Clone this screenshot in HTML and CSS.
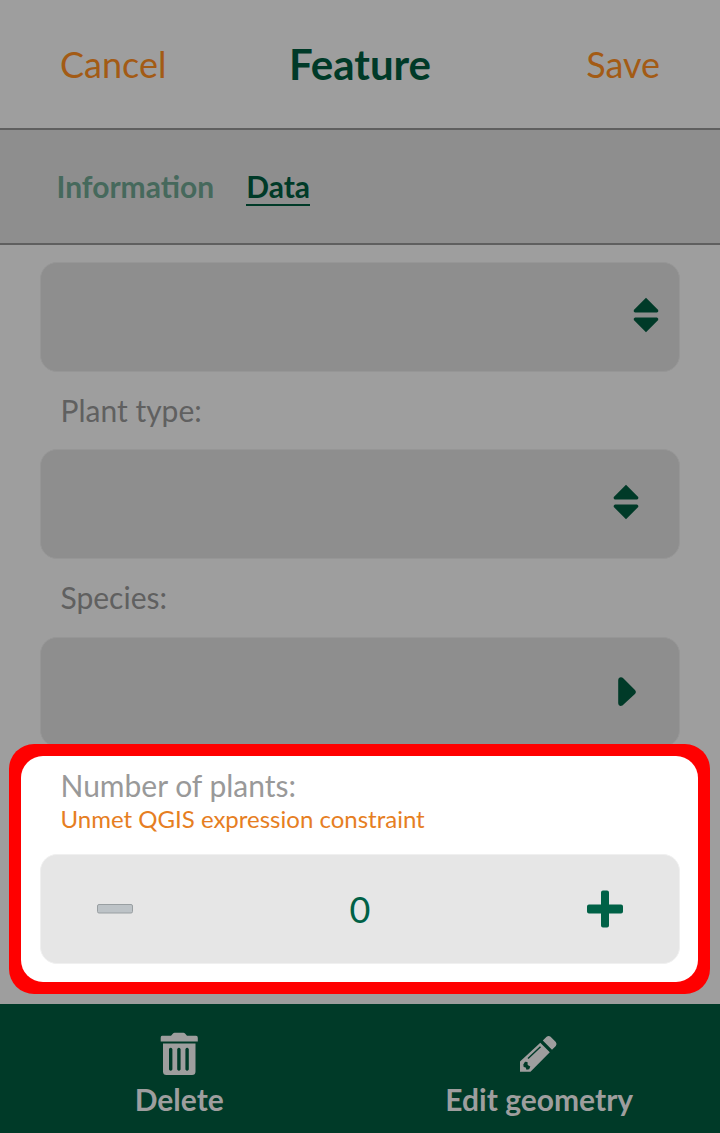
FILE: index.html
```html
<!DOCTYPE html>
<html lang="en">
<head>
<meta charset="utf-8">
<title>Feature</title>
<link rel="stylesheet" href="styles.css">
</head>
<body>
<div class="screen">
  <header class="header">
    <span class="action">Cancel</span>
    <h1 class="title">Feature</h1>
    <span class="action action-save">Save</span>
  </header>
  <nav class="tabs">
    <span class="tab">Information</span>
    <span class="tab tab-active">Data</span>
  </nav>
  <main class="form">
    <div class="field field-first">
      <svg class="icon-sort" viewBox="0 0 26 36"><path d="M13 .7 25.2 13q.6 2-1.2 2.6H2Q.2 15 .8 13ZM13 35.3.8 23Q.2 21 2 20.4h22q1.800.6 1.200 2.600Z"/></svg>
    </div>
    <div class="label">Plant type:</div>
    <div class="field field-inset">
      <svg class="icon-sort" viewBox="0 0 26 36"><path d="M13 .7 25.2 13q.6 2-1.2 2.6H2Q.2 15 .8 13ZM13 35.3.8 23Q.2 21 2 20.4h22q1.800.6 1.200 2.600Z"/></svg>
    </div>
    <div class="label">Species:</div>
    <div class="field field-next">
      <svg class="icon-next" viewBox="0 0 20 32"><path d="M1.200 4.500C1.200 1 4.500.2 6.500 2.500L18.200 14.200Q19.700 16 18.200 17.800L6.500 28.500C4.500 31 1.200 30 1.200 27Z"/></svg>
    </div>
  </main>
  <section class="highlight">
    <div class="panel">
      <div class="label-lit">Number of plants:</div>
      <div class="warning">Unmet QGIS expression constraint</div>
      <div class="stepper">
        <svg class="icon-step" viewBox="0 0 38 38"><rect class="minus" x="1.500" y="14.500" width="35" height="8.500" rx="1.500"/></svg>
        <span class="value">0</span>
        <svg class="icon-step" viewBox="0 0 38 38"><path class="plus" d="M17 .5h4q2 0 2 2V14.500h12q2 0 2 2v5q0 2-2 2H23v12q0 2-2 2h-4q-2 0-2-2v-12H3q-2 0-2-2v-5q0-2 2-2h12v-12q0-2 2-2Z"/></svg>
      </div>
    </div>
  </section>
  <footer class="toolbar">
    <div class="tool">
      <svg class="icon-tool" viewBox="0 0 44 44"><path fill-rule="evenodd" d="M5 3.700h9l2-2.200q.5-.7 1.500-.7h9q1 0 1.500.7l2 2.200h9q1.800 0 1.800 2V9.500H3.700V5.700q0-2 1.300-2ZM6 11.500h32.500V39.500q0 3.500-3.500 3.500h-25.500Q6 43 6 39.500ZM12 17v20.500q1.700 2.500 3.400 0V17q-1.700-2.500-3.400 0Zm8.200 0v20.500q1.700 2.500 3.400 0V17q-1.700-2.500-3.400 0Zm8.200 0v20.500q1.700 2.500 3.400 0V17q-1.700-2.500-3.400 0Z"/></svg>
      <span>Delete</span>
    </div>
    <div class="tool">
      <svg class="icon-tool" viewBox="0 0 44 44"><path fill-rule="evenodd" d="M25.800 8.500 29.600 4.700q2-1.500 4 0l5.200 5.200q1.500 2 0 4L35 17.700ZM23.300 10.700 32.800 20.200 13.500 39.700H3V29.500ZM10.500 26 11.500 27 24 15.300 23 14.300ZM6.300 32.500 6.700 35 8.700 35.500 9.500 37.700 12.200 37.200 13.300 34.500 10.700 33 10.500 30 8 29.700Z"/></svg>
      <span>Edit geometry</span>
    </div>
  </footer>
</div>
</body>
</html>
```

FILE: styles.css
```css
* { box-sizing: border-box; }
body { margin: 0; font-family: Lato, "Open Sans", sans-serif; }
svg { display: block; flex: none; }
.screen {
  display: flex;
  flex-direction: column;
  width: 720px;
  height: 1133px;
  overflow: hidden;
  background: #9e9e9e;
}
.header {
  display: grid;
  grid-template-columns: 1fr auto 1fr;
  align-items: center;
  height: 130px;
  padding: 0 60px;
  border-bottom: 2px solid #5f5f5f;
}
.action { font-size: 36px; line-height: 44px; color: #a35b15; }
.action-save { text-align: right; }
.title { margin: 0; font-size: 42px; line-height: 50px; font-weight: 700; color: #003a28; }
.tabs {
  display: flex;
  align-items: flex-start;
  gap: 32px;
  height: 115px;
  padding: 40px 56.5px 0;
  background: #8e8e8e;
  border-bottom: 2px solid #5f5f5f;
  font-size: 30px;
  line-height: 32px;
  font-weight: 700;
  color: #46695c;
}
.tab { height: 36px; }
.tab-active { border-bottom: 2px solid #003a28; color: #003a28; }
.form { height: 501px; padding: 17px 40px 0; }
.field {
  display: flex;
  align-items: center;
  justify-content: flex-end;
  height: 110px;
  padding-right: 20px;
  border: 1px solid #969696;
  border-radius: 17px;
  background: #8e8e8e;
  fill: #003a28;
}
.field-inset { padding-right: 40px; }
.field-next { padding-right: 42px; }
.icon-sort { width: 26px; height: 36px; margin-bottom: 5px; }
.icon-next { width: 20px; height: 32px; }
.label { height: 77.4px; padding: 20px 20.5px 0; font-size: 30px; line-height: 36px; color: #606060; }
.highlight {
  width: 701px;
  height: 250px;
  margin: -2px 0 10px 9px;
  padding: 12px;
  border-radius: 25px;
  background: #f00;
  z-index: 1;
}
.panel {
  height: 226px;
  padding: 11px 18px 0 19px;
  border-radius: 22px;
  background: #fff;
}
.label-lit { padding-left: 20.5px; font-size: 30px; line-height: 36px; color: #999; }
.warning { padding-left: 20.5px; font-size: 24px; line-height: 32px; color: #e67e22; }
.stepper {
  display: flex;
  align-items: center;
  justify-content: space-between;
  height: 110px;
  margin-top: 19px;
  padding: 0 55px;
  border: 1px solid #f0f0f0;
  border-radius: 17px;
  background: #e6e6e6;
}
.icon-step { width: 38px; height: 38px; }
.minus { fill: #bdc3c7; stroke: #999fa2; stroke-width: 1; }
.plus { fill: #006146; }
.value { font-size: 36px; line-height: 44px; color: #006146; }
.toolbar {
  display: grid;
  grid-template-columns: 1fr 1fr;
  flex: 1;
  background: #003a28;
  color: #9e9e9e;
}
.tool {
  display: flex;
  flex-direction: column;
  align-items: center;
  padding: 28px 1.5px 0 0;
  font-size: 30px;
  line-height: 36px;
  font-weight: 700;
}
.icon-tool { width: 44px; height: 44px; margin-bottom: 5px; fill: #9e9e9e; }
```
